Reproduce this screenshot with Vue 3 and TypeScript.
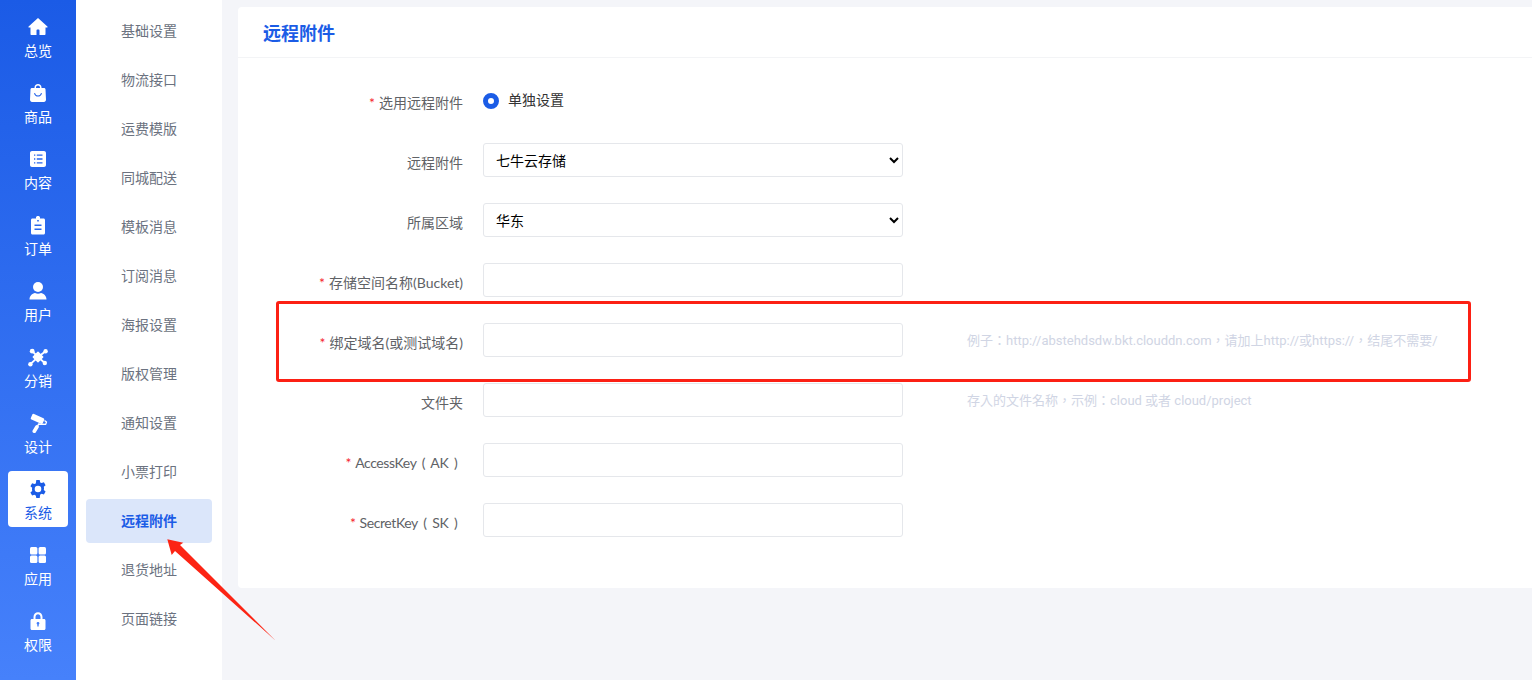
<script setup lang="ts">
interface NavItem { label: string; icon: string; active?: boolean }
const nav: NavItem[] = [
  { label: '总览', icon: 'home' },
  { label: '商品', icon: 'bag' },
  { label: '内容', icon: 'list' },
  { label: '订单', icon: 'clip' },
  { label: '用户', icon: 'user' },
  { label: '分销', icon: 'net' },
  { label: '设计', icon: 'roller' },
  { label: '系统', icon: 'gear', active: true },
  { label: '应用', icon: 'apps' },
  { label: '权限', icon: 'lock' },
]
const subs: string[] = ['基础设置', '物流接口', '运费模版', '同城配送', '模板消息', '订阅消息', '海报设置', '版权管理', '通知设置', '小票打印', '远程附件', '退货地址', '页面链接']
interface Row { label: string; req?: boolean; kind: 'select' | 'input'; value?: string; hint?: string; tight?: boolean }
const rows: Row[] = [
  { label: '远程附件', kind: 'select', value: '七牛云存储' },
  { label: '所属区域', kind: 'select', value: '华东' },
  { label: '存储空间名称(Bucket)', req: true, kind: 'input' },
  { label: '绑定域名(或测试域名)', req: true, kind: 'input', hint: '例子：http://abstehdsdw.bkt.clouddn.com，请加上http://或https://，结尾不需要/' },
  { label: '文件夹', kind: 'input', hint: '存入的文件名称，示例：cloud 或者 cloud/project' },
  { label: 'AccessKey ( AK )\u00a0', req: true, kind: 'input', tight: true },
  { label: 'SecretKey ( SK )\u00a0', req: true, kind: 'input', tight: true },
]
</script>

<template>
  <div class="page">
    <aside class="nav">
      <div v-for="n in nav" :key="n.label" class="nav-item" :class="{ active: n.active }">
        <svg class="ico" viewBox="0 0 20 20" width="20" height="20" fill="currentColor">
          <template v-if="n.icon === 'home'">
            <path fill-rule="evenodd" d="M10 1 19.400 9.400c.4.4.1 1-.4 1H17.500V17c0 .6-.4 1-1 1H3.500c-.6 0-1-.4-1-1v-6.600H1c-.5 0-.8-.6-.4-1ZM8.500 13.500V18h3v-4.500c0-.5-.4-1-1-1h-1c-.6 0-1 .5-1 1Z" />
          </template>
          <template v-else-if="n.icon === 'bag'">
            <path fill-rule="evenodd" d="M6.500 5V4.500C6.500 2.500 8 1 10 1s3.500 1.500 3.500 3.500V5H16c.8 0 1.400.6 1.500 1.300l.5 10.500c0 1.200-.9 2.200-2 2.200H4c-1.100 0-2-1-2-2.200L2.500 6.300C2.600 5.600 3.200 5 4 5ZM8 5h4v-.5C12 3.300 11.100 2.500 10 2.500S8 3.300 8 4.500ZM6 10.200c.6 2.300 2.100 3.400 4 3.400s3.400-1.100 4-3.400l-1-.2c-.5 1.700-1.500 2.500-3 2.500S7.500 11.700 7 10Z" />
          </template>
          <template v-else-if="n.icon === 'list'">
            <path fill-rule="evenodd" d="M4 2h12c1.100 0 2 .9 2 2v12c0 1.100-.9 2-2 2H4c-1.100 0-2-.9-2-2V4c0-1.100.9-2 2-2ZM6 5.500v1.300h1.300V5.500Zm2.800 0v1.300H14.500V5.500ZM6 9.300v1.400h1.300V9.300Zm2.800 0v1.400H14.500V9.300ZM6 13.200v1.300h1.300v-1.300Zm2.800 0v1.300H14.500v-1.300Z" />
          </template>
          <template v-else-if="n.icon === 'clip'">
            <path fill-rule="evenodd" d="M8 2.500C8 1.500 8.900 1 10 1s2 .5 2 1.500V3.500h3.500c.9 0 1.500.6 1.500 1.500v13c0 .9-.6 1.500-1.500 1.500h-11C3.600 19.500 3 18.900 3 18V5c0-.9.6-1.500 1.500-1.500H8ZM9.200 5v1.500h1.600V5ZM6.500 9.500V11h7V9.500Zm0 4V15h7v-1.500Z" />
          </template>
          <template v-else-if="n.icon === 'user'">
            <circle cx="10" cy="6" r="5" />
            <path d="M1.500 18.500c0-3.600 2.800-6 5.500-6.500 1.800 1 4.200 1 6 0 2.700.5 5.500 2.900 5.500 6.500Z" />
          </template>
          <template v-else-if="n.icon === 'net'">
            <path d="M10 5.300 14.700 10 10 14.700 5.300 10Z" stroke="currentColor" stroke-width="1.500" stroke-linejoin="round" />
            <circle cx="4.200" cy="4.200" r="2.400" />
            <circle cx="17.600" cy="4.200" r="2.200" />
            <circle cx="2.400" cy="17.200" r="2.200" />
            <circle cx="16.800" cy="16" r="2.200" />
            <path d="M4.200 4.200 10 10l7.600-5.800M2.400 17.200 10 10l6.800 6" stroke="currentColor" stroke-width="1.800" fill="none" />
          </template>
          <template v-else-if="n.icon === 'roller'">
            <rect x="3" y="2.800" width="13" height="6.200" rx="1.300" transform="rotate(24 9.500 5.900)" />
            <path d="M16.500 7.500 18.500 9 17.700 11.400 10.500 11 9.800 13" stroke="currentColor" stroke-width="1.300" stroke-linejoin="round" fill="none" />
            <path d="M9 13.800 6.300 18.300" stroke="currentColor" stroke-width="3.600" stroke-linecap="round" fill="none" />
          </template>
          <template v-else-if="n.icon === 'gear'">
            <path fill-rule="evenodd" d="M8.300 1h3.400l.5 2.400c.5.200 1 .4 1.400.7l2.300-.8 1.700 2.900-1.800 1.600a6 6 0 0 1 0 3.200l1.800 1.600-1.700 2.900-2.300-.8c-.4.300-.9.500-1.400.7L11.700 18.900H8.300l-.5-2.500c-.5-.2-1-.4-1.400-.7l-2.300.8-1.700-2.900 1.800-1.600a6 6 0 0 1 0-3.200L2.400 7.200l1.700-2.900 2.300.8c.4-.3.900-.5 1.400-.7ZM10 6.700a3.300 3.300 0 1 0 0 6.600 3.300 3.300 0 0 0 0-6.600Z" />
          </template>
          <template v-else-if="n.icon === 'apps'">
            <rect x="2" y="2" width="7.400" height="7.400" rx="1.500" />
            <rect x="10.600" y="2" width="7.400" height="7.400" rx="1.500" />
            <rect x="2" y="10.600" width="7.400" height="7.400" rx="1.500" />
            <rect x="10.600" y="10.600" width="7.400" height="7.400" rx="1.500" />
          </template>
          <template v-else>
            <path fill-rule="evenodd" d="M5.500 8V6c0-2.800 2-4.700 4.500-4.700S14.500 3.200 14.500 6v2H16c.9 0 1.500.6 1.500 1.500v8c0 .9-.6 1.500-1.500 1.500H4c-.9 0-1.500-.6-1.500-1.500v-8C2.500 8.600 3.100 8 4 8Zm2 0h5V6c0-1.700-1.100-2.800-2.500-2.800S7.500 4.300 7.500 6ZM10 11c-.8 0-1.400.6-1.400 1.300 0 .5.300 1 .7 1.200V15.500h1.400v-2c.4-.2.700-.7.700-1.200 0-.7-.6-1.300-1.400-1.300Z" />
          </template>
        </svg>
        <span class="nav-label">{{ n.label }}</span>
      </div>
    </aside>

    <nav class="sub">
      <div v-for="s in subs" :key="s" class="sub-item" :class="{ on: s === '远程附件' }">{{ s }}</div>
    </nav>

    <main class="main">
      <section class="card">
        <header class="card-head">远程附件</header>
        <form class="form" @submit.prevent>
          <div class="row radio-row">
            <label class="lab"><i>*</i>选用远程附件</label>
            <div class="radio"><span class="dot"></span><span class="radio-text">单独设置</span></div>
          </div>
          <div v-for="r in rows" :key="r.label" class="row">
            <label class="lab" :class="{ tight: r.tight }"><i v-if="r.req">*</i>{{ r.label }}</label>
            <select v-if="r.kind === 'select'" class="field sel"><option>{{ r.value }}</option></select>
            <input v-else class="field" type="text" />
            <span v-if="r.hint" class="hint">{{ r.hint }}</span>
          </div>
        </form>
      </section>
    </main>

    <div class="mark"></div>
    <svg class="arrow" width="120" height="110" viewBox="160 535 120 110">
      <polygon points="167.300,539.300 183.300,542.700 180,545 275.700,640.700 175,551 171.700,555" fill="#fc2414" />
    </svg>
  </div>
</template>

<style>
html, body { margin: 0; background: #f4f5f9; }
</style>

<style scoped>
.page {
  position: relative;
  display: flex;
  width: 1532px;
  height: 680px;
  overflow: hidden;
  background: #f4f5f9;
  font-family: Roboto, "Noto Sans CJK SC", sans-serif;
  font-size: 14px;
}
.nav {
  width: 76px;
  flex: none;
  display: flex;
  flex-direction: column;
  align-items: center;
  padding-top: 9px;
  box-sizing: border-box;
  background: linear-gradient(180deg, #1b5be6 0%, #4681fb 100%);
  color: #fff;
}
.nav-item {
  width: 60px;
  height: 56px;
  margin-bottom: 10px;
  border-radius: 4px;
  display: flex;
  flex-direction: column;
  align-items: center;
  padding-top: 8px;
  box-sizing: border-box;
  flex: none;
}
.nav-item.active { background: #fff; color: #1b5ce6; }
.ico { display: block; flex: none; }
.nav-label { font-size: 14px; line-height: 20px; margin-top: 4px; }
.sub {
  width: 146px;
  flex: none;
  background: #fff;
  padding: 9px 10px 0;
  box-sizing: border-box;
}
.sub-item {
  height: 44px;
  margin-bottom: 5px;
  line-height: 44px;
  padding-left: 35px;
  border-radius: 4px;
  font-size: 14px;
  color: #6b7280;
}
.sub-item.on { background: #dbe6fa; color: #1b5ce6; font-weight: 700; }
.main { flex: 1; min-width: 0; padding: 7px 0 0 16px; }
.card { background: #fff; border-radius: 4px 0 0 4px; }
.card-head {
  height: 50px;
  line-height: 54px;
  padding-left: 25px;
  border-bottom: 1px solid #f3f4f6;
  font-size: 18px;
  font-weight: 700;
  color: #1b5ce6;
}
.form { padding: 26px 0 25px; }
.row { display: flex; align-items: flex-start; height: 34px; margin-bottom: 26px; }
.radio-row { height: 33px; }
.lab {
  width: 225px;
  margin-right: 20px;
  flex: none;
  text-align: right;
  font-family: Lato, "Noto Sans CJK SC", sans-serif;
  font-size: 14px;
  line-height: 34px;
  padding-top: 3px;
  box-sizing: border-box;
  height: 34px;
  color: #606266;
  word-spacing: 2.500px;
  white-space: nowrap;
}
.lab.tight { letter-spacing: -0.400px; }
.radio-row .lab { padding-top: 2px; }
.lab i { color: #f5222d; font-style: normal; margin-right: 4px; }
.radio { display: flex; align-items: center; height: 34px; }
.dot {
  width: 16px;
  height: 16px;
  border-radius: 50%;
  border: 5px solid #1b5ce6;
  box-sizing: border-box;
  background: #fff;
  margin-right: 9px;
}
.radio-text { font-size: 14px; color: #333; margin-bottom: 4px; }
.field {
  width: 420px;
  height: 34px;
  flex: none;
  box-sizing: border-box;
  border: 1px solid #e5e7eb;
  border-radius: 3px;
  background: #fff;
  font-family: inherit;
  font-size: 14px;
  color: #000;
  padding: 0 8px;
  outline: none;
}
.sel { padding-top: 2px; }
.hint {
  margin-left: 64px;
  line-height: 36px;
  font-family: Roboto, "Noto Sans CJK TC", sans-serif;
  font-size: 13px;
  color: #d0d5e4;
  white-space: nowrap;
}
.mark {
  position: absolute;
  left: 276px;
  top: 301px;
  width: 1195px;
  height: 81px;
  box-sizing: border-box;
  border: 3px solid #fc2014;
  border-radius: 3px;
}
.arrow { position: absolute; left: 160px; top: 535px; }
</style>
